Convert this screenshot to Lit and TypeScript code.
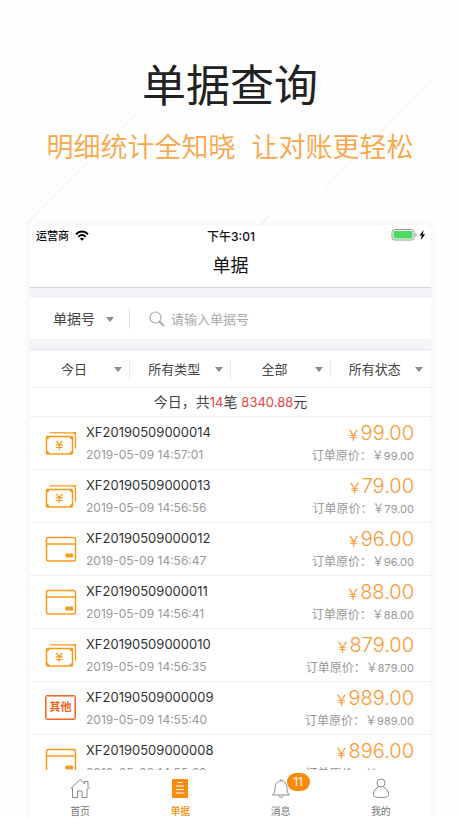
import { LitElement, html, css, svg } from "lit";
import { customElement, property } from "lit/decorators.js";
import { classMap } from "lit/directives/class-map.js";

type Kind = "cash" | "card" | "other";
interface Bill { kind: Kind; no: string; time: string; amount: string; }

const BILLS: Bill[] = [
  { kind: "cash", no: "XF20190509000014", time: "2019-05-09 14:57:01", amount: "99.00" },
  { kind: "cash", no: "XF20190509000013", time: "2019-05-09 14:56:56", amount: "79.00" },
  { kind: "card", no: "XF20190509000012", time: "2019-05-09 14:56:47", amount: "96.00" },
  { kind: "card", no: "XF20190509000011", time: "2019-05-09 14:56:41", amount: "88.00" },
  { kind: "cash", no: "XF20190509000010", time: "2019-05-09 14:56:35", amount: "879.00" },
  { kind: "other", no: "XF20190509000009", time: "2019-05-09 14:55:40", amount: "989.00" },
  { kind: "card", no: "XF20190509000008", time: "2019-05-09 14:55:30", amount: "896.00" },
];

const FILTERS = [
  { label: "日期", value: "今日" },
  { label: "类型", value: "所有类型" },
  { label: "范围", value: "全部" },
  { label: "状态", value: "所有状态" },
];

const TABS = [
  { id: "home", label: "首页", badge: "" },
  { id: "bill", label: "单据", badge: "" },
  { id: "bell", label: "消息", badge: "11" },
  { id: "me", label: "我的", badge: "" },
];

const TAB_ICONS: Record<string, unknown> = {
  home: svg`<path d="M1.500 11 11 1.500 15.500 5.800V3.500h3.500v5.500L20.500 11M3.500 10v9.500h5V13h4.500v6.500h5V10" />`,
  bill: svg`<rect class="solid" x="3" y="1" width="16" height="19" rx="1" />
    <path class="knock" d="M8.500 4.500h5M7 8h8M7 11.500h8M7 15h8" />`,
  bell: svg`<path d="M11 1v1.500M2.500 17c2-2 2.500-3.500 2.500-6.500C5 6 7.500 2.800 11 2.800S17 6 17 10.500c0 3 .5 4.500 2.500 6.500ZM8.800 17.500c.4 2.600 4 2.600 4.400 0" />`,
  me: svg`<circle cx="11" cy="5" r="4" /><path d="M8.500 9C5.500 10.500 3.500 13 3.500 16.500c0 2.500 2 3 7.500 3s7.500-.5 7.500-3C18.500 13 16.500 10.500 13.500 9" />`,
};

@customElement("bill-icon")
class BillIcon extends LitElement {
  @property() kind: Kind = "cash";

  static styles = css`
    :host { display: block; width: 32px; height: 26px; }
    svg { display: block; fill: none; stroke: #fa9a1c; stroke-width: 1.5; }
    .fill { fill: #fa9a1c; stroke: none; }
    .other {
      box-sizing: border-box; width: 31px; height: 25px; border: 1px solid #ee6c2a;
      outline: 1px solid #f5a880; outline-offset: -2px;
      border-radius: 2px; color: #ee6420; font-size: 11px; line-height: 23px;
      font-weight: 700; text-align: center;
    }
  `;

  render() {
    if (this.kind === "other") return html`<div class="other">其他</div>`;
    if (this.kind === "card") {
      return html`<svg width="32" height="26" viewBox="0 0 32 26" aria-hidden="true">
        <rect x="1.500" y="1.500" width="29" height="23.500" rx="2" />
        <path d="M1.500 8h29" />
        <circle class="fill" cx="22.500" cy="19.500" r="2.300" /><circle class="fill" cx="26" cy="19.500" r="2.300" />
      </svg>`;
    }
    return html`<svg width="32" height="26" viewBox="0 0 32 26" aria-hidden="true">
      <path stroke-width="1.300" d="M5 2.800h25.500v16" />
      <rect x="1.500" y="6.500" width="26" height="17.500" rx="1" />
      <path class="fill" d="M1.500 6.500h3a3 3 0 0 1-3 3ZM27.500 6.500h-3a3 3 0 0 0 3 3ZM1.500 24h3a3 3 0 0 0-3-3ZM27.500 24h-3a3 3 0 0 1 3-3ZM27.500 2.200h3.500v3.500Z" />
      <path stroke-width="1.200" d="M11.300 10.800 14.300 14.700l3-3.900M14.300 14.500v5.500M10.800 14.900h7M10.800 17.500h7" />
    </svg>`;
  }
}

@customElement("app-root")
class AppRoot extends LitElement {
  static styles = css`
    :host {
      display: flex; flex-direction: column; position: relative; height: 100vh; overflow: hidden;
      background: #fefefe; color: #444;
      font-family: Inter, "Noto Sans CJK SC", sans-serif; font-size: 13px;
    }
    * { box-sizing: border-box; }
    h1, h2, p { margin: 0; font-weight: 400; }
    button, select, input { font: inherit; color: inherit; border: 0; background: none; padding: 0; margin: 0; outline: none; }
    .rays { position: absolute; top: 0; left: 0; stroke: #f8ecd2; fill: none; }
    .hero { position: relative; height: 225px; flex: none; padding-top: 54px; text-align: center; }
    .hero h1 { font-size: 44px; line-height: 64px; color: #222; }
    .hero p {
      display: flex; justify-content: center; gap: 16px; margin-top: 10px;
      font-size: 27px; line-height: 40px; font-weight: 350; color: #fba648; white-space: nowrap;
    }
    .phone {
      position: relative; flex: 1; min-height: 0; display: flex; flex-direction: column;
      margin: 0 29px 0 30px; background: #fff; border-radius: 6px 6px 0 0;
      box-shadow: 0 0 10px rgba(0, 0, 0, 0.06); overflow: hidden;
    }
    .phone > * { flex: none; }
    .status {
      display: grid; grid-template-columns: 1fr auto 1fr; align-items: center;
      height: 20px; padding: 0 5px 0 6px; font-size: 12px; font-weight: 500; color: #111;
    }
    .status .left { display: flex; align-items: center; gap: 6px; font-size: 11px; }
    .status .right { display: flex; justify-content: flex-end; }
    .nav { height: 43px; border-bottom: 1px solid #d4d5da; }
    .nav h2 { font-size: 18px; line-height: 42px; text-align: center; color: #111; }
    .search {
      display: flex; align-items: center; height: 61px; padding-left: 23px;
      border: solid #f3f4f8; border-width: 10px 0; background: #fff;
    }
    .pick { position: relative; display: flex; align-items: center; }
    .pick select { appearance: none; width: 100%; height: 100%; }
    .pick::after {
      content: ""; position: absolute; right: 7px; top: 50%; margin-top: -2px;
      border: 4px solid transparent; border-top: 5px solid #8c8c8c; border-bottom: 0; pointer-events: none;
    }
    .search .pick { width: 77px; height: 20px; border-right: 1px solid #ddd; font-size: 14px; margin-right: 19px; }
    .search .pick::after { right: 15px; }
    .search svg { margin-right: 6px; }
    .search input { flex: 1; min-width: 0; height: 24px; }
    .search input::placeholder { color: #aaa; opacity: 1; }
    .filters {
      display: grid; grid-template-columns: repeat(4, 1fr); align-items: center;
      height: 39px; border-top: 1px solid #e6e6ea; border-bottom: 1px solid #eee;
    }
    .filters .pick { height: 18px; font-size: 13px; border-right: 1px solid #e8e8e8; }
    .filters .pick:last-child { border-right-color: transparent; }
    .filters select { padding-right: 11px; text-align: center; text-align-last: center; }
    .sum { height: 29px; border-bottom: 1px solid #eee; text-align: center; font-size: 14px; line-height: 28px; }
    .sum em { font-style: normal; font-size: 13px; color: #e64545; }
    .phone > .list { flex: 1; min-height: 0; overflow: hidden; margin: 0; padding: 0; list-style: none; }
    .row {
      display: grid; grid-template-columns: 32px 1fr auto; column-gap: 9px; align-items: center;
      height: 53px; padding: 0 17px 0 15px; border-bottom: 1px solid #eee;
    }
    .no { line-height: 20px; font-size: 13px; color: #333; }
    .time { line-height: 18px; margin-top: 4px; font-size: 12px; color: #999; }
    .price { display: flex; flex-direction: column; align-items: flex-end; }
    .amount { line-height: 24px; font-size: 20px; font-weight: 300; color: #fb9a35; }
    .amount small { font-size: 14px; font-weight: 400; }
    .origin { line-height: 18px; font-size: 12px; color: #999; }
    .origin small { font-size: 11px; }
    .tabs { display: grid; grid-template-columns: repeat(4, 1fr); height: 48px; background: #fff; }
    .tab {
      position: relative; display: flex; flex-direction: column; align-items: center;
      padding-top: 8px; gap: 5px; font-size: 10px; line-height: 14px; color: #777;
    }
    .tab svg { fill: none; stroke: #8a8a8a; stroke-width: 1; }
    .tab .solid { fill: #fc8d0a; stroke: none; }
    .tab .knock { stroke: #fff; stroke-width: 1.2; }
    .tab.on { color: #fc8d0a; font-weight: 500; }
    .badge {
      position: absolute; left: 50%; top: 3px; margin-left: 6px; width: 23px; height: 18px;
      border-radius: 9px; background: #fc8a06; color: #fff; font-size: 12px; line-height: 18px; font-weight: 400;
    }
  `;

  private pick(label: string, value: string) {
    return html`<div class="pick"><select aria-label=${label}><option>${value}</option></select></div>`;
  }

  render() {
    return html`
      <svg class="rays" width="460" height="230" aria-hidden="true">
        <path d="M26 224 138 112M323 190 434 79M259 226 269 216" />
      </svg>
      <header class="hero" lang="zh-CN">
        <h1>单据查询</h1>
        <p><span>明细统计全知晓</span><span>让对账更轻松</span></p>
      </header>
      <main class="phone" lang="zh-CN">
        <div class="status">
          <span class="left">运营商
            <svg width="14" height="11" viewBox="0 0 14 11" fill="none" stroke="#000" stroke-width="2" aria-hidden="true">
              <path d="M1 4.200C4.500 .7 9.500 .7 13 4.200M3.300 6.700c2.200-2 5.200-2 7.400 0" />
              <path fill="#000" stroke="none" d="M4.800 8.500c1.300-1.100 3.100-1.100 4.400 0L7 10.800Z" />
            </svg>
          </span>
          <span>下午3:01</span>
          <span class="right">
            <svg width="35" height="12" viewBox="0 0 35 12" aria-hidden="true">
              <rect x="1" y=".5" width="22" height="10.500" rx="2.500" fill="#fff" stroke="#8d9a8d" />
              <rect x="2.500" y="2" width="19" height="7.500" rx="1" fill="#4cd964" />
              <path d="M24.500 4v4c1.300-.6 1.300-3.400 0-4Z" fill="#777" />
              <path d="M32.500 1 28.500 6.500h2.300L29.800 11l4.400-5.800h-2.400Z" fill="#000" />
            </svg>
          </span>
        </div>
        <div class="nav"><h2>单据</h2></div>
        <div class="search">
          ${this.pick("查询方式", "单据号")}
          <svg width="16" height="16" viewBox="0 0 16 16" fill="none" stroke="#aaa" aria-hidden="true">
            <circle cx="6.500" cy="6.500" r="5.500" stroke-width="1.200" /><path d="m10.500 10.500 4.500 4.500" stroke-width="1.800" />
          </svg>
          <input type="text" aria-label="单据号" placeholder="请输入单据号" />
        </div>
        <div class="filters">${FILTERS.map((f) => this.pick(f.label, f.value))}</div>
        <p class="sum">今日，共<em>14</em>笔 <em>8340.88</em>元</p>
        <ul class="list">
          ${BILLS.map((b) => html`<li class="row">
            <bill-icon kind=${b.kind}></bill-icon>
            <div><div class="no">${b.no}</div><div class="time">${b.time}</div></div>
            <div class="price">
              <div class="amount"><small>￥</small>${b.amount}</div>
              <div class="origin">订单原价：￥<small>${b.amount}</small></div>
            </div>
          </li>`)}
        </ul>
        <nav class="tabs">
          ${TABS.map((t) => html`<button class=${classMap({ tab: true, on: t.id === "bill" })}>
            <svg width="22" height="21" viewBox="0 0 22 21" aria-hidden="true">${TAB_ICONS[t.id]}</svg>
            <span>${t.label}</span>
            ${t.badge ? html`<span class="badge">${t.badge}</span>` : ""}
          </button>`)}
        </nav>
      </main>
    `;
  }
}
